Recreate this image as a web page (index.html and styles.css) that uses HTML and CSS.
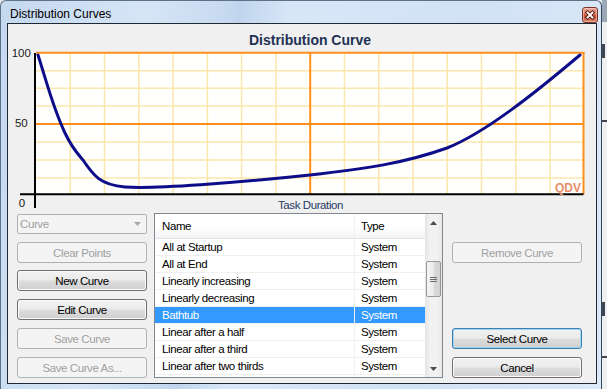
FILE: index.html
```html
<!DOCTYPE html>
<html lang="en">
<head>
  <meta charset="UTF-8" />
  <title>Distribution Curves</title>
  <link rel="stylesheet" href="styles.css">
</head>
<body>
  <div class="desktop">
    <div class="window">
      <div class="titlebar">
        <span class="title">Distribution Curves</span>
        <button class="close" aria-label="Close">
          <svg width="14" height="14" viewBox="0 0 14 14">
            <path d="M4.5 4.5 L9.5 9.5 M9.5 4.5 L4.5 9.5" stroke="#5a1a10" stroke-width="3.6" stroke-linecap="square"/>
            <path d="M4.5 4.5 L9.5 9.5 M9.5 4.5 L4.5 9.5" stroke="#fff" stroke-width="1.8" stroke-linecap="square"/>
          </svg>
        </button>
      </div>

      <div class="client">
        <!-- chart drawn as one svg, page offset (8,24) -->
        <svg class="chart" width="588" height="189" viewBox="0 0 588 189">
          <text class="chart-title" x="302" y="21" text-anchor="middle">Distribution Curve</text>
          <rect x="28" y="29" width="548" height="141" fill="#fffffd"/>

          <g class="grid-minor">
            <line x1="62.3" y1="29" x2="62.3" y2="170"/>
            <line x1="96.5" y1="29" x2="96.5" y2="170"/>
            <line x1="130.8" y1="29" x2="130.8" y2="170"/>
            <line x1="165.1" y1="29" x2="165.1" y2="170"/>
            <line x1="199.4" y1="29" x2="199.4" y2="170"/>
            <line x1="233.6" y1="29" x2="233.6" y2="170"/>
            <line x1="267.9" y1="29" x2="267.9" y2="170"/>
            <line x1="336.4" y1="29" x2="336.4" y2="170"/>
            <line x1="370.7" y1="29" x2="370.7" y2="170"/>
            <line x1="405" y1="29" x2="405" y2="170"/>
            <line x1="439.2" y1="29" x2="439.2" y2="170"/>
            <line x1="473.5" y1="29" x2="473.5" y2="170"/>
            <line x1="507.8" y1="29" x2="507.8" y2="170"/>
            <line x1="542" y1="29" x2="542" y2="170"/>
            <line x1="28" y1="46.7" x2="576" y2="46.7"/>
            <line x1="28" y1="64.2" x2="576" y2="64.2"/>
            <line x1="28" y1="82" x2="576" y2="82"/>
            <line x1="28" y1="118" x2="576" y2="118"/>
            <line x1="28" y1="136" x2="576" y2="136"/>
            <line x1="28" y1="154" x2="576" y2="154"/>
          </g>

          <g class="grid-major">
            <line x1="28" y1="28.7" x2="576.5" y2="28.7"/>
            <line x1="28" y1="100" x2="576" y2="100"/>
            <line x1="302.2" y1="29" x2="302.2" y2="170"/>
            <line x1="575.5" y1="28" x2="575.5" y2="170"/>
          </g>

          <path class="curve" transform="translate(27,29)"
                d="M3,2 C12,30 18,55 30,80 C37,95 42,100 48,107 C58,122 65,132 90,134 C120,136 200,130 275,122 C330,116 370,110 412,95 C450,80 500,40 545,2"/>

          <g class="axis">
            <line x1="27" y1="29" x2="27" y2="184"/>
            <line x1="12" y1="170.3" x2="575.5" y2="170.3" stroke-width="1.5"/>
          </g>

          <text class="axis-label" x="13.3" y="33" text-anchor="middle">100</text>
          <text class="axis-label" x="13.3" y="103" text-anchor="middle">50</text>
          <text class="axis-label" x="14" y="183" text-anchor="middle">0</text>
          <text class="axis-title" x="302.5" y="185" text-anchor="middle">Task Duration</text>
          <text class="watermark" x="573" y="168" text-anchor="end">QDV</text>
        </svg>

        <div class="controls">
          <div class="col col-left">
            <div class="combo">
              <span>Curve</span>
              <svg width="7" height="4" viewBox="0 0 7 4"><path d="M0 0 H7 L3.5 4 Z" fill="#a7a7a7"/></svg>
            </div>
            <button class="btn btn-first" disabled>Clear Points</button>
            <button class="btn btn-new">New Curve</button>
            <button class="btn">Edit Curve</button>
            <button class="btn" disabled>Save Curve</button>
            <button class="btn" disabled>Save Curve As...</button>
          </div>

          <div class="list">
            <div class="list-body">
              <div class="list-head">
                <div class="cell name">Name</div>
                <div class="cell type">Type</div>
              </div>
              <div class="row"><div class="cell name">All at Startup</div><div class="cell type">System</div></div>
              <div class="row"><div class="cell name">All at End</div><div class="cell type">System</div></div>
              <div class="row"><div class="cell name">Linearly increasing</div><div class="cell type">System</div></div>
              <div class="row"><div class="cell name">Linearly decreasing</div><div class="cell type">System</div></div>
              <div class="row selected"><div class="cell name">Bathtub</div><div class="cell type">System</div></div>
              <div class="row"><div class="cell name">Linear after a half</div><div class="cell type">System</div></div>
              <div class="row"><div class="cell name">Linear after a third</div><div class="cell type">System</div></div>
              <div class="row"><div class="cell name">Linear after two thirds</div><div class="cell type">System</div></div>
              <div class="row"><div class="cell name"></div><div class="cell type"></div></div>
            </div>
            <div class="scrollbar">
              <div class="sb-arrow">
                <svg width="7" height="4" viewBox="0 0 7 4"><path d="M0 4 H7 L3.5 0 Z" fill="#4a4a4a"/></svg>
              </div>
              <div class="sb-track">
                <div class="sb-thumb">
                  <svg width="7" height="7" viewBox="0 0 7 7">
                    <path d="M0 1.5 H7 M0 3.5 H7 M0 5.5 H7" stroke="#6b6b6b" stroke-width="1"/>
                  </svg>
                </div>
              </div>
              <div class="sb-arrow">
                <svg width="7" height="4" viewBox="0 0 7 4"><path d="M0 0 H7 L3.5 4 Z" fill="#4a4a4a"/></svg>
              </div>
            </div>
          </div>

          <div class="col col-right">
            <button class="btn btn-remove" disabled>Remove Curve</button>
            <button class="btn btn-default btn-select">Select Curve</button>
            <button class="btn">Cancel</button>
          </div>
        </div>
      </div>
    </div>
    <div class="behind">
      <div class="peek peek-top"></div>
      <div class="peek peek-f"></div>
      <div class="peek peek-a"></div>
      <div class="peek peek-b"></div>
      <div class="peek peek-c"></div>
    </div>
  </div>
</body>
</html>
```

FILE: styles.css
```css
* {
  box-sizing: border-box;
}
body {
  margin: 0;
  width: 607px;
  height: 389px;
  overflow: hidden;
  font-family: "Liberation Sans", Arial, sans-serif;
  font-size: 11.5px;
  letter-spacing: -0.4px;
  color: #000;
}
.desktop {
  display: flex;
  height: 389px;
  background: #e6e8eb;
}

/* window frame */
.window {
  flex: none;
  width: 602px;
  height: 395px;
  padding: 0 4px 0 6px;
  border: 1px solid #5f7187;
  border-right-color: #34465a;
  border-radius: 6px 6px 0 0;
  background: linear-gradient(100deg, #c4d8ef 0%, #d5e5f6 22%, #cadcf1 32%, #c0d5ed 36%, #d8e7f8 44%, #d1e2f5 70%, #dbe9f8 100%);
}
.titlebar {
  display: flex;
  justify-content: space-between;
  align-items: flex-start;
  height: 22px;
}
.title {
  padding: 6px 0 0 3px;
  font-size: 12px;
  line-height: 14px;
  letter-spacing: 0;
}
.close {
  width: 16px;
  height: 16px;
  margin-top: 6px;
  margin-right: -1px;
  padding: 0;
  display: flex;
  align-items: center;
  justify-content: center;
  border: 1px solid #7c3324;
  border-radius: 3px;
  background: linear-gradient(#e9aa9c 0%, #d4735f 45%, #c34a33 55%, #d98a6d 100%);
  box-shadow: inset 0 0 0 1px rgba(255, 220, 210, 0.5);
}
.client {
  width: 590px;
  height: 361px;
  border: 1px solid #1f2934;
  background: #f0f0f0;
}

/* chart */
.chart {
  display: block;
}
.chart-title {
  font-family: "Liberation Sans", Arial, sans-serif;
  font-size: 14px;
  font-weight: bold;
  letter-spacing: 0;
  fill: #1f3154;
}
.grid-minor line {
  stroke: #fbe7ab;
  stroke-width: 1.5;
}
.grid-major line {
  stroke: #ff8f1a;
  stroke-width: 2;
}
.curve {
  fill: none;
  stroke: #0d0d8a;
  stroke-width: 3;
  stroke-linecap: round;
  stroke-linejoin: round;
}
.axis line {
  stroke: #000;
  stroke-width: 2;
}
.axis-label {
  font-size: 11.5px;
  letter-spacing: 0;
  fill: #1a1a1a;
}
.axis-title {
  font-size: 11.5px;
  letter-spacing: -0.4px;
  fill: #1f3a64;
}
.watermark {
  font-size: 12px;
  font-weight: bold;
  letter-spacing: 0;
  fill: #e88d68;
}

/* controls under the chart */
.controls {
  display: flex;
  align-items: flex-start;
  padding-left: 9px;
}
.col {
  display: flex;
  flex-direction: column;
  width: 130px;
  flex: none;
}
.col-right {
  margin-left: 9px;
}
.combo {
  height: 20px;
  margin-top: 1px;
  display: flex;
  align-items: center;
  justify-content: space-between;
  padding: 0 5px 0 2px;
  border: 1px solid #adb2b5;
  border-radius: 2px;
  background: #f4f4f4;
  color: #a0a0a0;
}
.btn {
  height: 21px;
  margin-top: 8px;
  padding: 0;
  font-family: inherit;
  font-size: 11.5px;
  letter-spacing: -0.4px;
  color: #000;
  border: 1px solid #707070;
  border-radius: 3px;
  background: linear-gradient(#f2f2f2 0%, #ebebeb 48%, #dddddd 52%, #cfcfcf 100%);
  box-shadow: inset 0 0 0 1px #fbfbfb;
}
.btn-new {
  margin-top: 7px;
}
.btn:disabled {
  color: #a0a0a0;
  border-color: #adb2b5;
  background: #f4f4f4;
  box-shadow: none;
}
.btn-default {
  border-color: #3c7fb1;
  box-shadow: inset 0 0 0 1px #9fd5f3;
}
.btn-remove {
  margin-top: 29px;
}
.btn-select {
  margin-top: 65px;
}

/* list view */
.list {
  flex: none;
  display: flex;
  width: 289px;
  height: 165px;
  margin-left: 7px;
  border: 1px solid #828790;
  background: #fff;
}
.list-body {
  width: 270px;
  overflow: hidden;
}
.list-head {
  display: flex;
  height: 25px;
  border-bottom: 1px solid #e3e4e6;
  background: linear-gradient(#ffffff 55%, #f3f4f6 100%);
}
.list-head .cell {
  line-height: 24px;
}
.list-head .name {
  border-right-color: #e2e3e5;
}
.cell {
  flex: none;
  white-space: nowrap;
  overflow: hidden;
}
.cell.name {
  width: 200px;
  padding-left: 7px;
  border-right: 1px solid #f0f0f0;
}
.cell.type {
  width: 70px;
  padding-left: 6px;
}
.row {
  display: flex;
  height: 17px;
  line-height: 16px;
  border-bottom: 1px solid #f0f0f0;
}
.row.selected {
  background: #3399ff;
  color: #fff;
}

/* scrollbar */
.scrollbar {
  width: 17px;
  display: flex;
  flex-direction: column;
  background: linear-gradient(90deg, #e4e4e4, #f2f2f2 30%, #f2f2f2 70%, #e8e8e8);
}
.sb-arrow {
  height: 17px;
  display: flex;
  align-items: center;
  justify-content: center;
}
.sb-track {
  flex: 1;
}
.sb-thumb {
  height: 36px;
  margin: 30px 1px 0;
  display: flex;
  align-items: center;
  justify-content: center;
  border: 1px solid #979797;
  border-radius: 2px;
  background: linear-gradient(90deg, #f6f6f6, #e9e9e9 50%, #dadada 51%, #d2d2d2);
}

/* strip of the window behind */
.behind {
  flex: 1;
  display: flex;
  flex-direction: column;
  background: #eef0f2;
}
.peek {
  flex: none;
  background: #3d4652;
}
.peek-top {
  height: 22px;
  background: #9aa8b8;
}
.peek-f {
  height: 14px;
  width: 3px;
  margin-top: 22px;
}
.peek-a {
  height: 2px;
  margin-top: 62px;
}
.peek-b {
  height: 14px;
  width: 3px;
  margin-top: 180px;
}
.peek-c {
  height: 2px;
  margin-top: 40px;
}
```
